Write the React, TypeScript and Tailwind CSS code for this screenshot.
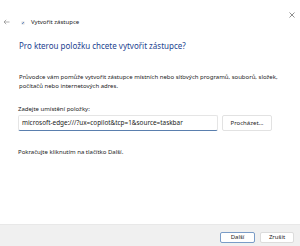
export default function App() {
  return (
    <div className="w-[300px] h-[246px] bg-white flex flex-col overflow-hidden font-['Noto_Sans',sans-serif] text-[#1b1b1b]">
      <div className="flex justify-between h-[33px] pl-[3px] pr-[5px]">
        <div className="flex items-center h-[12px] mt-[16px] gap-[6px]">
          <svg width="7" height="6" viewBox="0 0 7 6" className="text-[#8a8a8a]">
            <path d="M6.5 3H1M3.2 0.8L1 3l2.2 2.2" fill="none" stroke="currentColor" strokeWidth="0.7" />
          </svg>
          <svg width="4" height="4" viewBox="0 0 4 4" className="ml-[5px] mt-[2px]">
            <rect x="0.5" y="0.5" width="3" height="3" fill="#d9d9d9" />
            <path d="M1 3L3 1" stroke="#3a6fc4" strokeWidth="0.7" />
          </svg>
          <span className="text-[6px] leading-none">Vytvořit zástupce</span>
        </div>
        <svg width="6" height="6" viewBox="0 0 6 6" className="mt-[12px]">
          <path d="M0.5 0.5l5 5M5.5 0.5l-5 5" stroke="#444" strokeWidth="0.6" />
        </svg>
      </div>

      <div className="flex-1 flex flex-col px-[18px]">
        <h1 className="mt-[7px] pl-[1px] text-[8px] leading-[12px] text-[#1c3f8f] font-normal">
          Pro kterou položku chcete vytvořit zástupce?
        </h1>
        <p className="mt-[21px] pl-[1px] whitespace-nowrap text-[6px] leading-[9px]">
          Průvodce vám pomůže vytvořit zástupce místních nebo síťových programů, souborů, složek,
          <br />
          počítačů nebo internetových adres.
        </p>
        <div className="mt-[14px] text-[6px] leading-[9px]">Zadejte umístění položky:</div>
        <div className="flex gap-[4px] mt-[1px]">
          <div className="w-[200px] h-[16px] flex items-center px-[3px] bg-white border border-[#e5e5e5] border-b-[#5a7fae] rounded-[2px] text-[6.4px] text-[#1b1b1b]">
            microsoft-edge:///?ux=copilot&amp;tcp=1&amp;source=taskbar
          </div>
          <div className="w-[50px] h-[16px] flex items-center justify-center border border-[#e2e2e2] rounded-[2px] bg-white text-[6px]">
            Procházet...
          </div>
        </div>
        <div className="mt-[17px] text-[6px] leading-[9px]">Pokračujte kliknutím na tlačítko Další.</div>
      </div>

      <div className="h-[22px] bg-[#f0f0f0] border-t border-[#e8e8e8] flex justify-end items-start gap-[5px] pt-[7px] pr-[6px]">
        <div className="w-[35px] h-[11px] flex items-center justify-center bg-white border border-[#7a9cc7] rounded-[2px] text-[6px]">
          Další
        </div>
        <div className="w-[34px] h-[11px] flex items-center justify-center bg-white border border-[#dcdcdc] rounded-[2px] text-[6px]">
          Zrušit
        </div>
      </div>
    </div>
  );
}
